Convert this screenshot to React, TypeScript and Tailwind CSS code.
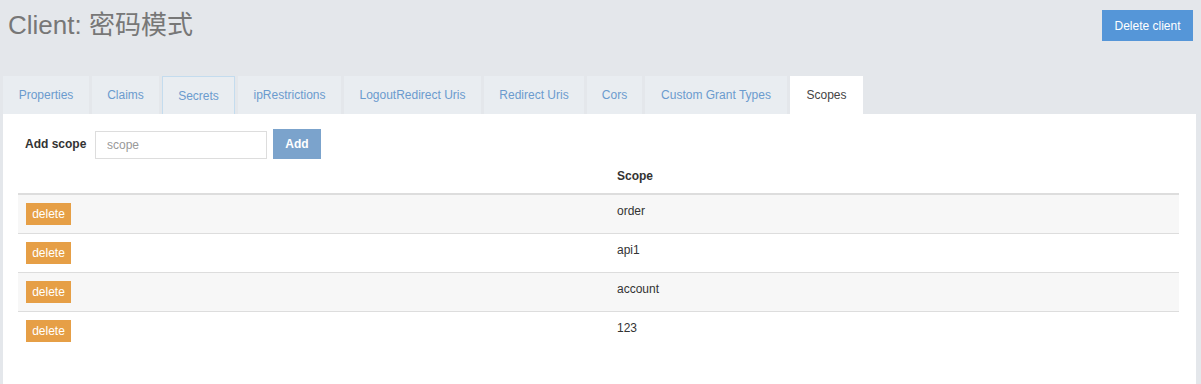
import React from "react";

const tabs = [
  { label: "Properties", w: "w-[86px]" },
  { label: "Claims", w: "w-[67px]" },
  { label: "Secrets", w: "w-[73px]", outlined: true },
  { label: "ipRestrictions", w: "w-[103px]" },
  { label: "LogoutRedirect Uris", w: "w-[137px]" },
  { label: "Redirect Uris", w: "w-[100px]" },
  { label: "Cors", w: "w-[55px]" },
  { label: "Custom Grant Types", w: "w-[142px]" },
  { label: "Scopes", w: "w-[73px]", active: true },
];

const scopes = ["order", "api1", "account", "123"];

export default function App() {
  return (
    <div
      className="min-h-[384px] bg-[#e4e7eb] text-[12px] text-[#333]"
      style={{ fontFamily: '"Liberation Sans", Arial, "Noto Sans CJK SC", sans-serif' }}
    >
      {/* header */}
      <div className="flex h-[76px] items-start justify-between pl-[8px] pr-[8px]">
        <h1 className="pt-[12px] text-[26px] leading-[26px] font-normal text-[#777]">
          Client: 密码模式
        </h1>
        <button className="mt-[10px] h-[31px] w-[91px] bg-[#5596d8] text-[12px] text-white">
          Delete client
        </button>
      </div>

      {/* tabs */}
      <div className="flex gap-[3px] pl-[3px]">
        {tabs.map((t) => (
          <div
            key={t.label}
            className={
              "flex h-[38px] items-center justify-center border " +
              t.w +
              " " +
              (t.active
                ? "border-white bg-white text-[#444]"
                : t.outlined
                ? "border-[#c4dcee] border-b-0 bg-[#e9edf1] text-[#6b9bce]"
                : "border-transparent bg-[#e9edf1] text-[#6b9bce]")
            }
          >
            {t.label}
          </div>
        ))}
      </div>

      {/* panel */}
      <div className="ml-[3px] mr-[5px] min-h-[270px] bg-white pl-[15px] pr-[17px] pt-[15px]">
        <div className="flex h-[30px] items-center">
          <label className="ml-[7px] w-[70px] font-bold text-[#333]">Add scope</label>
          <input
            className="mt-[2px] h-[28px] w-[172px] border border-[#ddd] px-[11px] text-[12px] text-[#555] outline-none placeholder:text-[#999]"
            placeholder="scope"
          />
          <button className="ml-[6px] h-[30px] w-[48px] bg-[#7ba3cc] font-bold text-white">
            Add
          </button>
        </div>

        <div className="mt-[1px]">
          <div className="grid grid-cols-[591px_1fr] border-b-2 border-[#ddd]">
            <div className="p-[8px] leading-[17px]" />
            <div className="p-[8px] leading-[17px] font-bold">Scope</div>
          </div>
          {scopes.map((s, i) => (
            <div
              key={s}
              className={
                "grid grid-cols-[591px_1fr] " +
                (i > 0 ? "border-t border-[#ddd] " : "") +
                (i % 2 === 0 ? "bg-[#f7f7f7]" : "bg-white")
              }
            >
              <div className="p-[8px]">
                <button className="h-[22px] w-[45px] bg-[#e69f46] text-[12px] leading-[18px] text-white">
                  delete
                </button>
              </div>
              <div className="p-[8px] leading-[17px] text-[#333]">{s}</div>
            </div>
          ))}
        </div>
      </div>
    </div>
  );
}
